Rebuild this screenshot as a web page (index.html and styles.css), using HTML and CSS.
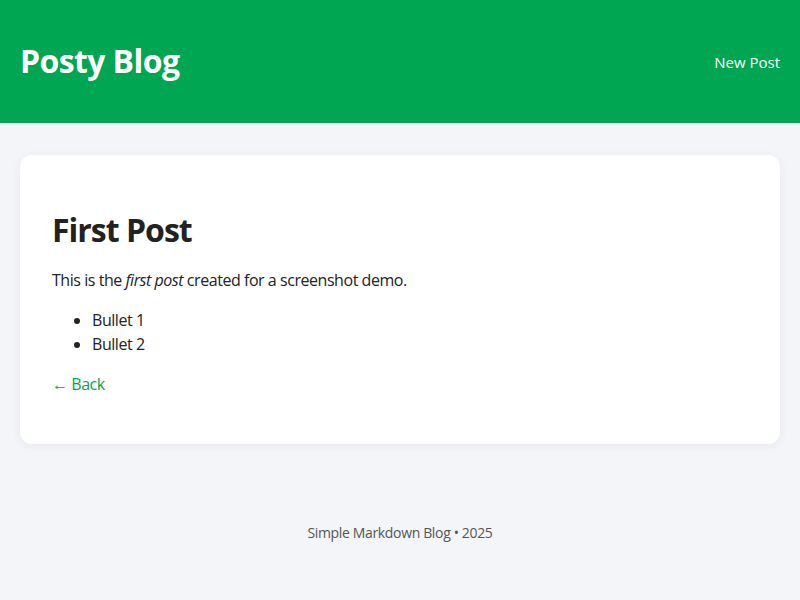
FILE: index.html
```html
<!DOCTYPE html>
<html lang="en">
<head>
<meta charset="utf-8">
<title>Posty Blog</title>
<link rel="stylesheet" href="styles.css">
</head>
<body>
<header class="site-header">
  <h1 class="brand">Posty Blog</h1>
  <a class="nav-link" href="#">New Post</a>
</header>
<main class="content">
  <article class="card">
    <h1 class="post-title">First Post</h1>
    <p>This is the <em>first post</em> created for a screenshot demo.</p>
    <ul class="bullets">
      <li>Bullet 1</li>
      <li>Bullet 2</li>
    </ul>
    <p class="back-row"><a class="back" href="#">← Back</a></p>
  </article>
</main>
<footer class="site-footer">Simple Markdown Blog • 2025</footer>
</body>
</html>
```

FILE: styles.css
```css
* { box-sizing: border-box; }
html, body { margin: 0; padding: 0; }
body {
  background: #f4f5f9;
  font-family: "Open Sans", "Noto Sans", sans-serif;
  color: #222;
  font-size: 16px;
  line-height: 1.5;
  letter-spacing: -0.45px;
}
.site-header {
  background: #00a651;
  height: 123px;
  padding: 0 20px;
  display: flex;
  align-items: center;
  justify-content: space-between;
}
.brand {
  margin: 0;
  color: #fff;
  font-size: 32px;
  font-weight: 700;
  line-height: 1.2;
  letter-spacing: -0.6px;
}
.nav-link {
  color: #fff;
  text-decoration: none;
  font-size: 15px;
  letter-spacing: 0;
  padding-top: 2px;
}
.content {
  padding: 32px 20px 0;
}
.card {
  background: #fff;
  border-radius: 12px;
  padding: 32px;
  box-shadow: 0 2px 10px rgba(0, 0, 0, 0.06);
}
.post-title {
  font-size: 32px;
  font-weight: 700;
  margin: 21px 0 17px;
  line-height: 1.35;
  letter-spacing: -1px;
}
.card p { margin: 16px 0; }
.bullets { margin: 16px 0; padding-left: 40px; }
.back-row { margin-bottom: 16px; }
.back { color: #00a651; text-decoration: none; }
.site-footer {
  text-align: center;
  color: #555;
  font-size: 14px;
  padding: 78px 0 40px;
  letter-spacing: -0.35px;
}
```
